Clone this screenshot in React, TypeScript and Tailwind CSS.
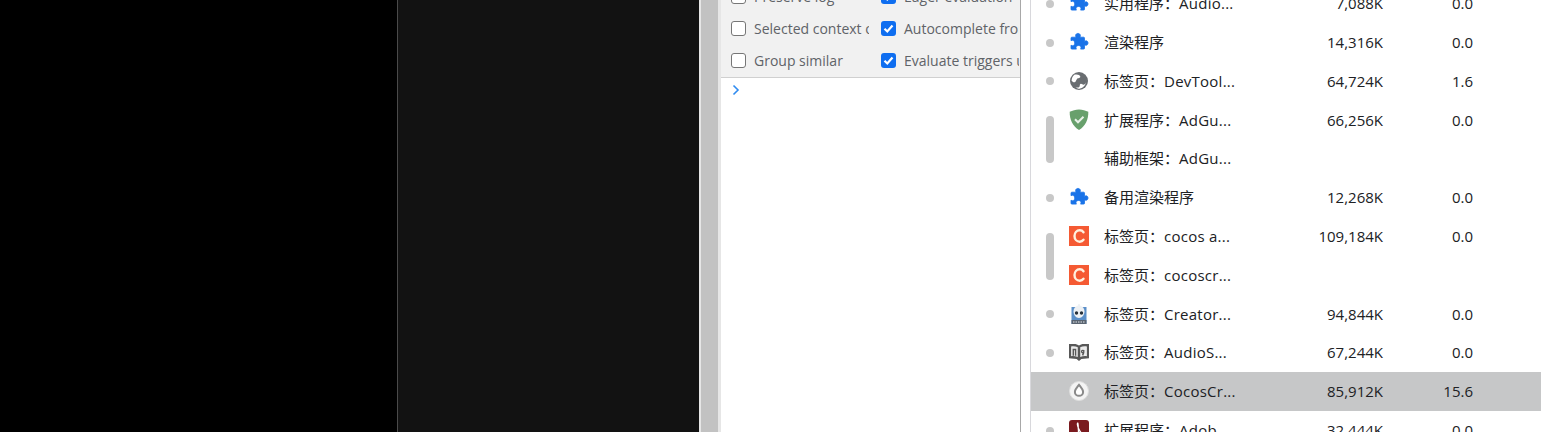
import React from "react";

const Puzzle = () => (
  <svg width="20" height="20" viewBox="1 -1 20 20">
    <path
      fill="#1a73e8"
      stroke="#1a73e8"
      strokeWidth="0.8"
      strokeLinejoin="round"
      d="M7.600 2.600c0-1.500 1.200-2.200 2.400-2.200s2.400.8 2.400 2.200c0 .7-.3 1.100-.4 1.600h3.600c.6 0 .9.300.9.900v3.300c.5-.3 1-.6 1.500-.6 1.300 0 2 1.100 2 2.200s-.7 2.300-2 2.300c-.5 0-1-.3-1.500-.6v3.500c0 .6-.3.900-.9.900h-3c.2-.6.400-1 .4-1.600 0-1.200-1.200-2-2.400-2s-2.600.8-2.600 2c0 .6.200 1 .4 1.600H3.900c-.6 0-.9-.3-.9-.9v-3c.6.300 1 .5 1.600.5 1.300 0 2.100-1.200 2.100-2.500S5.900 7.200 4.600 7.200c-.6 0-1 .2-1.600.5V5.100c0-.6.300-.9.900-.9H8c-.1-.5-.4-.9-.4-1.600z"
    />
  </svg>
);

const Globe = () => (
  <svg width="20" height="20" viewBox="0 0 20 20">
    <circle cx="10" cy="10" r="9" fill="#696d71" />
    <path fill="#fff" d="M5.300 3.800c2.100-.8 5.600-.4 6 1.800.2 1.500-2.300 1.500-3.300 2.400-1.200 1-.7 2.900-2.400 3.200-1.200.2-2.300-.6-3-1.500.1-2.400 1-4.500 2.700-5.900z" />
    <path fill="#fff" d="M17.400 8.300c.3 2-.6 4.600-2.100 5.300-1.500.7-2.200-1-3.500-.8-1.500.2-.6 2.100-1.500 3.100-.7.800-2.800.9-4 .3 1.100.9 3 1.600 4.200 1.500 3.900-.3 7.200-4.400 6.900-9.400z" />
  </svg>
);

const Shield = () => (
  <svg width="20" height="22" viewBox="0 0 20 22">
    <path fill="#68a06c" d="M10 .5c3.500 0 6.500 1 9.300 2.300.2 7.500-2.800 14.500-9.300 18.200C3.500 17.300.5 10.300.7 2.800 3.500 1.500 6.500.5 10 .5z" />
    <path fill="none" stroke="#e8f1e8" strokeWidth="2" d="M6 10.300l3 3 5.500-5.500" />
  </svg>
);

const CocosC = () => (
  <svg width="20" height="20" viewBox="0 0 20 20">
    <rect width="20" height="20" fill="#f55a33" />
    <path fill="none" stroke="#fff1df" strokeWidth="2.400" strokeLinecap="round" d="M14.500 6.200C13.500 4.800 12 4.300 10.700 4.300c-3 0-5.200 2.500-5.200 5.700s2.200 5.700 5.200 5.700c1.400 0 2.900-.6 3.800-1.900" />
  </svg>
);

const Creator = () => (
  <svg width="16" height="20" viewBox="0 0 16 20">
    <rect x="0.500" y="3" width="15" height="17" fill="#5b8fc9" />
    <rect x="0.500" y="16" width="15" height="4" fill="#5a6470" />
    <path fill="#eef1f4" d="M8 0c1 0 1.300.8 1.200 1.700 2.700.6 4.300 3 4.300 5.800 0 3-2.400 6.500-5.500 6.500S2.500 10.500 2.500 7.500c0-2.800 1.600-5.200 4.300-5.800C6.700.8 7 0 8 0z" />
    <circle cx="5.500" cy="9" r="1.700" fill="#27303a" />
    <circle cx="10.500" cy="9" r="1.700" fill="#27303a" />
    <path stroke="#e2e6ea" strokeWidth="1.200" strokeDasharray="1.500 1" d="M2 18h12" />
  </svg>
);

const Book = () => (
  <svg width="21" height="19" viewBox="0 0 21 19">
    <path fill="#585858" d="M0 .5 5.500.5c2 0 3.800.6 5 1.600C11.700 1.100 13.500.5 15.500.5H21V15.500l-8 .8-2.500 2.200L8 16.300 0 15.500z" />
    <path fill="#ececec" d="M2.200 3.200c2.200-.5 4.800-.3 7 .9v10.200c-2-1-4.800-1.200-7-.9zM18.800 3.200c-2.200-.5-4.800-.3-7 .9v10.200c2-1 4.800-1.200 7-.9z" />
    <path fill="none" stroke="#585858" strokeWidth="1.500" d="M4.500 13V6.300h2.400V13M14.300 12.500c1.200-2.500 1.500-3.500 1.200-5-1.500-.6-2.600.3-2.200 1.500.4.900 1.500.9 2.300.4" />
  </svg>
);

const Drop = () => (
  <svg width="20" height="20" viewBox="0 0 20 20">
    <circle cx="10" cy="10" r="9.500" fill="#f4f4f4" />
    <circle cx="10" cy="10" r="9.500" fill="none" stroke="#dedede" strokeWidth="1" />
    <path fill="#fff" stroke="#8a8a8a" strokeWidth="2" d="M10 3.800c1.900 2.500 4.100 4.700 4.100 7.100 0 2.200-1.900 3.900-4.100 3.900s-4.100-1.700-4.100-3.900c0-2.400 2.200-4.600 4.100-7.100z" />
  </svg>
);

const Adobe = () => (
  <svg width="20" height="20" viewBox="0 0 20 20">
    <rect width="20" height="20" rx="3" fill="#7a1a1f" />
    <path fill="none" stroke="#fff" strokeWidth="1.300" d="M8.800 3c-.8.300-.4 3 1 6 1 2.300 3 5 5.500 5.500 1.500.2 1.500-1.500-.5-1.500-3 0-8 1.500-9.500 4-.8 1.500.8 1.800 2 .3 1.500-2 2.500-5.500 2-8.500-.1-2.800-.1-5.700-.5-5.800z" />
  </svg>
);

type Row = { icon?: React.ReactNode; prefix: string; rest?: string; mem?: string; cpu?: string; dot?: boolean; selected?: boolean };

const rows: Row[] = [
  { icon: <Puzzle />, prefix: "实用程序：", rest: "Audio...", mem: "7,088K", cpu: "0.0", dot: true },
  { icon: <Puzzle />, prefix: "渲染程序", mem: "14,316K", cpu: "0.0", dot: true },
  { icon: <Globe />, prefix: "标签页：", rest: "DevTool...", mem: "64,724K", cpu: "1.6", dot: true },
  { icon: <Shield />, prefix: "扩展程序：", rest: "AdGu...", mem: "66,256K", cpu: "0.0" },
  { prefix: "辅助框架：", rest: "AdGu..." },
  { icon: <Puzzle />, prefix: "备用渲染程序", mem: "12,268K", cpu: "0.0", dot: true },
  { icon: <CocosC />, prefix: "标签页：", rest: "cocos a...", mem: "109,184K", cpu: "0.0" },
  { icon: <CocosC />, prefix: "标签页：", rest: "cocoscr..." },
  { icon: <Creator />, prefix: "标签页：", rest: "Creator...", mem: "94,844K", cpu: "0.0", dot: true },
  { icon: <Book />, prefix: "标签页：", rest: "AudioS...", mem: "67,244K", cpu: "0.0", dot: true },
  { icon: <Drop />, prefix: "标签页：", rest: "CocosCr...", mem: "85,912K", cpu: "15.6", selected: true },
  { icon: <Adobe />, prefix: "扩展程序：", rest: "Adob...", mem: "32,444K", cpu: "0.0", dot: true },
];

const Check = ({ label, checked }: { label: string; checked?: boolean }) => (
  <div className="flex items-center h-[32px] whitespace-nowrap overflow-hidden">
    <span
      className={
        checked
          ? "w-[15px] h-[15px] rounded-[3px] bg-[#0f6ef0] flex items-center justify-center shrink-0"
          : "w-[15px] h-[15px] rounded-[3px] bg-white border border-[#767676] shrink-0"
      }
    >
      {checked && (
        <svg width="11" height="11" viewBox="0 0 11 11">
          <path d="M1.500 5.800l2.800 2.700 5.200-6" fill="none" stroke="#fff" strokeWidth="2.200" />
        </svg>
      )}
    </span>
    <span className="ml-[8px] text-[#5f6368] text-[14px]">{label}</span>
  </div>
);

export default function App() {
  return (
    <div
      className="flex w-[1541px] h-[432px] overflow-hidden bg-white"
      style={{ fontFamily: '"Open Sans", "Noto Sans CJK SC", sans-serif' }}
    >
      <div className="w-[397px] bg-black" />
      <div className="w-[302px] bg-[#121212] border-l border-[#4a4a4a]" />
      <div className="w-[22px] bg-[#c2c2c2] border-l-2 border-r-[3px] border-l-[#e6e6e6] border-r-[#e6e6e6]" />
      <div className="w-[300px] border-r border-[#a8a8a8] flex flex-col">
        <div className="h-[78px] bg-[#f1f1f1] border-b border-[#d0d0d0] overflow-hidden">
          <div className="grid grid-cols-[138px_1fr] gap-x-[12px] pl-[10px] pr-[1px] mt-[-20px]">
            <div className="min-w-0 overflow-hidden">
              <Check label="Preserve log" />
              <Check label="Selected context only" />
              <Check label="Group similar" />
            </div>
            <div className="min-w-0 overflow-hidden">
              <Check label="Eager evaluation" checked />
              <Check label="Autocomplete from history" checked />
              <Check label="Evaluate triggers user activation" checked />
            </div>
          </div>
        </div>
        <div className="pl-[11px] pt-[6px] flex-1 bg-white">
          <svg width="8" height="12" viewBox="0 0 8 12">
            <path d="M1.500 1.500 6 6l-4.500 4.500" fill="none" stroke="#2f8bf0" strokeWidth="1.600" />
          </svg>
        </div>
      </div>
      <div className="w-[10px] bg-white border-r border-[#d8d8dc]" />
      <div className="relative flex-1 overflow-hidden mt-[-16px]">
        {rows.map((r) => (
          <div
            key={r.prefix + (r.rest ?? "")}
            className={`flex items-center h-[38.800px] text-[15px] text-[#202124] ${r.selected ? "bg-[#c6c7c8]" : ""}`}
          >
            <span className="w-[38px] flex justify-end pr-[15px]">
              {r.dot && <span className="block w-[8px] h-[8px] mt-[1px] rounded-full bg-[#c8c8c8]" />}
            </span>
            <span className="w-[20px] h-[22px] flex items-center justify-center">{r.icon}</span>
            <span className="ml-[15px] w-[179px] whitespace-nowrap">
              {r.prefix}
              {r.rest && <span className="tracking-[0.25px]">{r.rest}</span>}
            </span>
            <span className="w-[100px] text-right">{r.mem}</span>
            <span className="w-[90px] text-right">{r.cpu}</span>
          </div>
        ))}
        <div className="absolute left-[15px] top-[132px] w-[8px] h-[47px] rounded-full bg-[#c8c8c8]" />
        <div className="absolute left-[15px] top-[249px] w-[8px] h-[47px] rounded-full bg-[#c8c8c8]" />
      </div>
    </div>
  );
}
